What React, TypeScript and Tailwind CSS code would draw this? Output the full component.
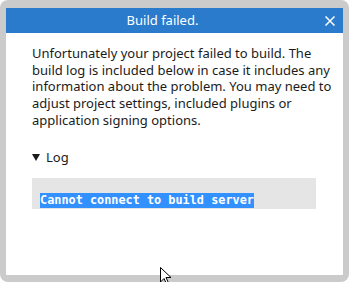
import React from "react";

const font = { fontFamily: '"Noto Sans", "Open Sans", sans-serif' };

const CloseIcon = () => (
  <svg width="10" height="10" viewBox="0 0 10 10" className="block">
    <path d="M0.5 0.5 L9.5 9.5 M9.5 0.5 L0.5 9.5" stroke="#ffffff" strokeWidth="1.5" />
  </svg>
);

const Cursor = () => (
  <svg width="12" height="18" viewBox="0 0 12 18" className="absolute left-[160px] top-[267px]">
    <path d="M0.5 0.5 L0.5 15 L4 11.5 L6.5 17 L8.5 16 L6 10.5 L11 10.5 Z" fill="#ffffff" stroke="#000000" strokeWidth="1" />
  </svg>
);

export default function App() {
  return (
    <div className="relative w-[349px] h-[282px] overflow-hidden bg-white">
      <div className="w-full h-full rounded-[8px] bg-[#cbcbcb] pt-[8px] px-[6px] pb-[7px]">
        <div className="flex flex-col h-full bg-white">
          <div className="relative flex items-center justify-center h-[25px] bg-[#2a7bcb] pr-[24px]">
            <span className="text-white text-[13px]" style={font}>
              Build failed.
            </span>
            <div className="absolute right-[8px] top-[8px]">
              <CloseIcon />
            </div>
          </div>
          <div className="pl-[26px] pr-[4px] pt-[12px]">
            <p className="text-[13px] leading-[16.7px] text-[#1b1b1b]" style={font}>
              Unfortunately your project failed to build. The build log is included below in case it includes any
              information about the problem. You may need to adjust project settings, included plugins or
              application signing options.
            </p>
            <div className="flex items-center mt-[19px] text-[13px] text-[#1b1b1b]" style={font}>
              <svg width="8" height="7" viewBox="0 0 8 7" className="mr-[6px]">
                <path d="M0 0 L8 0 L4 7 Z" fill="#1b1b1b" />
              </svg>
              <span>Log</span>
            </div>
            <div className="mt-[11px] w-[284px] h-[31px] bg-[#e5e5e5] pl-[8px] pt-[8px]">
              <span
                className="bg-[#3391ff] text-white text-[11.85px] leading-[15px] inline-block font-bold"
                style={{ fontFamily: '"DejaVu Sans Mono", "Liberation Mono", monospace' }}
              >
                Cannot connect to build server
              </span>
            </div>
          </div>
        </div>
      </div>
      <Cursor />
    </div>
  );
}
